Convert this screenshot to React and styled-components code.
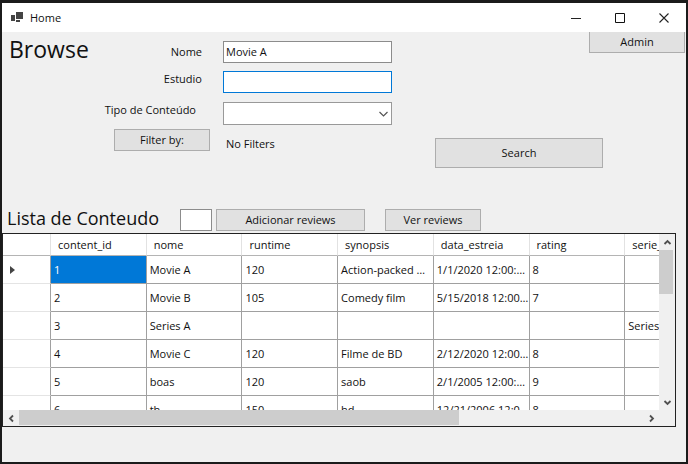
import React from "react";
import styled, { createGlobalStyle } from "styled-components";

const GlobalStyle = createGlobalStyle`
  *, *::before, *::after { box-sizing: border-box; }
  body {
    margin: 0;
    background: #1b1b1b;
    color: #111;
    font: 11px/16px "Open Sans", "Noto Sans", sans-serif;
  }
  button, input, select { font: inherit; color: inherit; margin: 0; border-radius: 0; }
`;

const Desktop = styled.div`
  min-height: 100vh;
  padding: 3px 2px 2px;
  display: flex;
`;

const Window = styled.main`
  flex: 1;
  min-width: 0;
  display: flex;
  flex-direction: column;
  background: #f0f0f0;
`;

const TitleBar = styled.header`
  height: 29px;
  display: flex;
  align-items: center;
  padding-left: 9px;
  background: #fff;
  svg { display: block; }
`;

const WindowTitle = styled.span`
  flex: 1;
  padding-left: 6px;
`;

const CaptionButton = styled.button`
  width: 44px;
  height: 28px;
  padding: 0;
  display: grid;
  place-items: center;
  border: 0;
  background: transparent;
`;

const SearchArea = styled.section`
  display: flex;
  align-items: flex-start;
`;

const PageTitle = styled.h1`
  width: 96px;
  margin: 0;
  padding-left: 7px;
  font-size: 23px;
  line-height: 34px;
  font-weight: 400;
`;

const FilterForm = styled.form`
  display: grid;
  grid-template-columns: 112px 169px;
  grid-template-rows: 30px 31px 27px 24px;
  column-gap: 13px;
  align-items: start;
  padding-top: 9px;
`;

const FieldLabel = styled.label`
  justify-self: end;
  padding-right: ${(p) => p.$inset}px;
  line-height: ${(p) => p.$line}px;
`;

const TextField = styled.input`
  width: ${(p) => (p.$small ? "32px" : "100%")};
  height: 22px;
  padding: 0 2px 2px;
  border: 1px solid ${(p) => (p.$active ? "#0078d7" : "#8c8c8c")};
  background: #fff;
  outline: none;
`;

const SelectWrap = styled.div`
  display: grid;
  align-items: center;
  > * { grid-area: 1 / 1; }
  svg { justify-self: end; margin-right: 4px; pointer-events: none; }
`;

const SelectField = styled.select`
  width: 100%;
  height: 23px;
  padding: 0 3px;
  appearance: none;
  border: 1px solid #999;
  background: #fff;
`;

const Button = styled.button`
  width: ${(p) => p.$width}px;
  height: ${(p) => (p.$tall ? 30 : 22)}px;
  padding: 0;
  border: 1px solid #adadad;
  background: #e1e1e1;
  text-align: center;
`;

const AdminButton = styled(Button)`
  align-self: flex-end;
  height: 21px;
  margin-right: 1px;
  border-top: 0;
`;

const FilterButton = styled(Button)`
  justify-self: end;
`;

const FilterState = styled.output`
  padding-left: 3px;
  line-height: 30px;
`;

const Actions = styled.div`
  flex: 1;
  display: flex;
  flex-direction: column;
  align-items: flex-start;
  gap: 85px;
  padding-left: 43px;
`;

const ListBar = styled.section`
  display: flex;
  align-items: center;
  height: 26px;
  margin-top: 39px;
  padding-left: 5px;
`;

const ListTitle = styled.h2`
  align-self: flex-start;
  width: 173px;
  margin: 0;
  font-size: 18px;
  line-height: 22px;
  font-weight: 400;
  white-space: nowrap;
`;

const ReviewActions = styled.div`
  display: flex;
  gap: 20px;
  padding-left: 4px;
`;

const DataGrid = styled.section`
  display: grid;
  grid-template-columns: minmax(0, 1fr) 16px;
  grid-template-rows: 176px 16px;
  margin-right: 10px;
  border: 1px solid #222;
  background: #f0f0f0;
`;

const Viewport = styled.div`
  overflow: hidden;
  background: #fff;
`;

const Table = styled.table`
  width: 718px;
  table-layout: fixed;
  border-collapse: separate;
  border-spacing: 0;
`;

const RowHeadCol = styled.col`
  width: 48px;
`;

const HeadCell = styled.th`
  height: 22px;
  padding: 0 7px;
  text-align: left;
  font-weight: 400;
  border-right: 1px solid #e2e2e2;
  border-bottom: 1px solid #b4b4b4;
`;

const Row = styled.tr`
  height: 28px;
`;

const RowHead = styled.th`
  padding: 0 0 0 6px;
  border-right: 1px solid #a0a0a0;
  border-bottom: 1px solid #e4e4e4;
  svg { display: block; }
`;

const Cell = styled.td`
  padding: 0 0 0 3px;
  overflow: hidden;
  white-space: nowrap;
  text-overflow: ellipsis;
  border-right: 1px solid #a0a0a0;
  border-bottom: 1px solid #a0a0a0;
  background: ${(p) => (p.$selected ? "#0078d7" : "#fff")};
  color: ${(p) => (p.$selected ? "#fff" : "inherit")};
`;

const ScrollBar = styled.div`
  display: flex;
  flex-direction: ${(p) => (p.$vertical ? "column" : "row")};
`;

const ScrollButton = styled.button`
  flex: 0 0 16px;
  height: 16px;
  padding: 0;
  display: grid;
  place-items: center;
  border: 0;
  background: transparent;
`;

const Track = styled.div`
  flex: 1;
`;

const Thumb = styled.div`
  width: ${(p) => (p.$vertical ? "14px" : "70.5%")};
  height: ${(p) => (p.$vertical ? "44px" : "15px")};
  background: #cdcdcd;
`;

const arrowPaths = {
  up: "M1.5 6 4.5 3 7.5 6",
  down: "M1.5 3 4.5 6 7.5 3",
  left: "M6 1.5 3 4.5 6 7.5",
  right: "M3 1.5 6 4.5 3 7.5",
};

const Arrow = ({ dir }) => (
  <svg width="9" height="9" fill="none" stroke="#505050" strokeWidth="1.8">
    <path d={arrowPaths[dir]} />
  </svg>
);

const columns = ["content_id", "nome", "runtime", "synopsis", "data_estreia", "rating", "serie_id"];

const rows = [
  ["1", "Movie A", "120", "Action-packed movie", "1/1/2020 12:00:00 AM", "8", ""],
  ["2", "Movie B", "105", "Comedy film", "5/15/2018 12:00:00 AM", "7", ""],
  ["3", "Series A", "", "", "", "", "Series A"],
  ["4", "Movie C", "120", "Filme de BD", "2/12/2020 12:00:00 AM", "8", ""],
  ["5", "boas", "120", "saob", "2/1/2005 12:00:00 AM", "9", ""],
  ["6", "th", "150", "hd", "12/21/2006 12:00:00 AM", "8", ""],
];

function Scroll({ vertical }) {
  const [back, forward] = vertical ? ["up", "down"] : ["left", "right"];
  return (
    <ScrollBar $vertical={vertical}>
      <ScrollButton type="button" aria-label={`Scroll ${back}`}><Arrow dir={back} /></ScrollButton>
      <Track><Thumb $vertical={vertical} /></Track>
      <ScrollButton type="button" aria-label={`Scroll ${forward}`}><Arrow dir={forward} /></ScrollButton>
    </ScrollBar>
  );
}

export default function App() {
  return (
    <>
      <GlobalStyle />
      <Desktop>
        <Window>
          <TitleBar>
            <svg width="13" height="12" fill="#444">
              <path d="M5 0h7v7H5z" />
              <path d="M0 3h4v6H0z" />
              <path d="M5 8h4v2H5z" />
            </svg>
            <WindowTitle>Home</WindowTitle>
            <CaptionButton type="button" aria-label="Minimize">
              <svg width="10" height="10"><path d="M0 5.5h10" stroke="#222" /></svg>
            </CaptionButton>
            <CaptionButton type="button" aria-label="Maximize">
              <svg width="10" height="10"><path d="M.5.5h9v9h-9z" fill="none" stroke="#111" /></svg>
            </CaptionButton>
            <CaptionButton type="button" aria-label="Close">
              <svg width="10" height="10"><path d="m.5.5 9 9m0-9-9 9" stroke="#222" strokeWidth="1.1" /></svg>
            </CaptionButton>
          </TitleBar>

          <SearchArea>
            <PageTitle>Browse</PageTitle>
            <FilterForm onSubmit={(e) => e.preventDefault()}>
              <FieldLabel htmlFor="nome" $inset={8} $line={22}>Nome</FieldLabel>
              <TextField id="nome" defaultValue="Movie A" />
              <FieldLabel htmlFor="estudio" $inset={8} $line={16}>Estudio</FieldLabel>
              <TextField id="estudio" $active />
              <FieldLabel htmlFor="tipo" $inset={14} $line={16}>Tipo de Conteúdo</FieldLabel>
              <SelectWrap>
                <SelectField id="tipo" defaultValue=""><option value="" /></SelectField>
                <svg width="9" height="6" fill="none" stroke="#555" strokeWidth="1.2">
                  <path d="M.5 1 4.5 5l4-4" />
                </svg>
              </SelectWrap>
              <FilterButton type="button" $width={96}>Filter by:</FilterButton>
              <FilterState>No Filters</FilterState>
            </FilterForm>
            <Actions>
              <AdminButton type="button" $width={96}>Admin</AdminButton>
              <Button type="button" $width={168} $tall>Search</Button>
            </Actions>
          </SearchArea>

          <ListBar>
            <ListTitle>Lista de Conteudo</ListTitle>
            <TextField $small aria-label="Review" />
            <ReviewActions>
              <Button type="button" $width={149}>Adicionar reviews</Button>
              <Button type="button" $width={96}>Ver reviews</Button>
            </ReviewActions>
          </ListBar>

          <DataGrid>
            <Viewport>
              <Table>
                <colgroup>
                  <RowHeadCol />
                  {columns.map((name) => <col key={name} />)}
                </colgroup>
                <thead>
                  <tr>
                    <HeadCell />
                    {columns.map((name) => <HeadCell key={name} scope="col">{name}</HeadCell>)}
                  </tr>
                </thead>
                <tbody>
                  {rows.map((row, r) => (
                    <Row key={row[0]}>
                      <RowHead scope="row">
                        {r === 0 && (
                          <svg width="7" height="10" fill="#444"><path d="M1 1v8l5-4z" /></svg>
                        )}
                      </RowHead>
                      {row.map((value, c) => (
                        <Cell key={columns[c]} $selected={r === 0 && c === 0}>{value}</Cell>
                      ))}
                    </Row>
                  ))}
                </tbody>
              </Table>
            </Viewport>
            <Scroll vertical />
            <Scroll />
          </DataGrid>
        </Window>
      </Desktop>
    </>
  );
}
